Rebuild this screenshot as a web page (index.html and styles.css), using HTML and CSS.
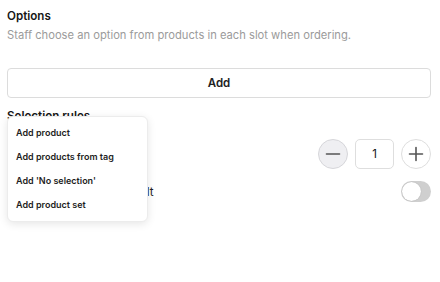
FILE: index.html
```html
<!DOCTYPE html>
<html>
<head>
<meta charset="utf-8">
<link rel="stylesheet" href="styles.css">
</head>
<body>
<div class="page">
  <section class="section">
    <h2 class="title">Options</h2>
    <p class="subtitle">Staff choose an option from products in each slot when ordering.</p>
    <button class="add-btn">Add</button>
  </section>
  <section class="section rules">
    <h2 class="title">Selection rules</h2>
    <div class="row stepper-row">
      <span class="label">Maximum selections</span>
      <div class="stepper">
        <button class="circle minus" aria-label="Decrease">
          <svg width="16" height="16" viewBox="0 0 16 16"><path d="M1.5 8h13" stroke="#555" stroke-width="1.6" stroke-linecap="round"/></svg>
        </button>
        <div class="qty">1</div>
        <button class="circle plus" aria-label="Increase">
          <svg width="16" height="16" viewBox="0 0 16 16"><path d="M1.5 8h13M8 1.5v13" stroke="#555" stroke-width="1.6" stroke-linecap="round"/></svg>
        </button>
      </div>
    </div>
    <div class="row toggle-row">
      <span class="label">Select an option by default</span>
      <div class="toggle"><span class="knob"></span></div>
    </div>
  </section>
  <div class="menu">
    <div class="menu-item">Add product</div>
    <div class="menu-item">Add products from tag</div>
    <div class="menu-item">Add 'No selection'</div>
    <div class="menu-item">Add product set</div>
  </div>
</div>
</body>
</html>
```

FILE: styles.css
```css
* { box-sizing: border-box; }
html, body { margin: 0; padding: 0; background: #fff; }
body {
  font-family: Inter, "Noto Sans", "Liberation Sans", sans-serif;
  color: #1a1a1a;
}
.page {
  position: relative;
  min-height: 282px;
  padding: 8px 9px 0 7px;
}
.title {
  margin: 0;
  font-size: 11.6px;
  font-weight: 600;
  line-height: 16px;
  color: #161616;
}
.subtitle {
  margin: 3px 0 0;
  font-size: 11.2px;
  line-height: 16px;
  color: #9b9b9b;
}
.add-btn {
  display: block;
  width: 100%;
  height: 30px;
  margin-top: 25px;
  border: 1px solid #dcdcdc;
  border-radius: 4px;
  background: #fff;
  font-family: inherit;
  font-size: 11.5px;
  font-weight: 600;
  color: #222;
}
.rules { margin-top: 10px; }
.row {
  display: flex;
  align-items: center;
  justify-content: space-between;
}
.stepper-row { margin-top: 15px; }
.toggle-row { margin-top: 12px; }
.label {
  font-size: 11.6px;
  color: #222;
}
.stepper {
  display: flex;
  align-items: center;
  gap: 7px;
}
.circle {
  width: 30px;
  height: 30px;
  border-radius: 50%;
  border: 1px solid #dedede;
  background: #fff;
  padding: 0;
  display: flex;
  align-items: center;
  justify-content: center;
}
.circle.minus { background: #efeff2; border-color: #d6d6da; }
.qty {
  width: 39px;
  height: 30px;
  border: 1px solid #dedede;
  border-radius: 5px;
  display: flex;
  align-items: center;
  justify-content: center;
  font-size: 11.5px;
  color: #111;
}
.toggle {
  width: 30px;
  height: 21px;
  border-radius: 11px;
  background: #cfcfcf;
  position: relative;
}
.knob {
  position: absolute;
  left: 1px;
  top: 1px;
  width: 19px;
  height: 19px;
  border-radius: 50%;
  background: #fff;
  box-shadow: 0 0 1px rgba(0,0,0,0.25);
}
.menu {
  position: absolute;
  left: 7px;
  top: 116px;
  width: 141px;
  padding: 4px 0;
  background: #fff;
  border: 1px solid #ececec;
  border-radius: 6px;
  box-shadow: 0 2px 8px rgba(0,0,0,0.10);
}
.menu-item {
  height: 24px;
  line-height: 24px;
  padding: 0 8px;
  font-size: 9px;
  font-weight: 600;
  color: #1e1e1e;
  white-space: nowrap;
}
```
